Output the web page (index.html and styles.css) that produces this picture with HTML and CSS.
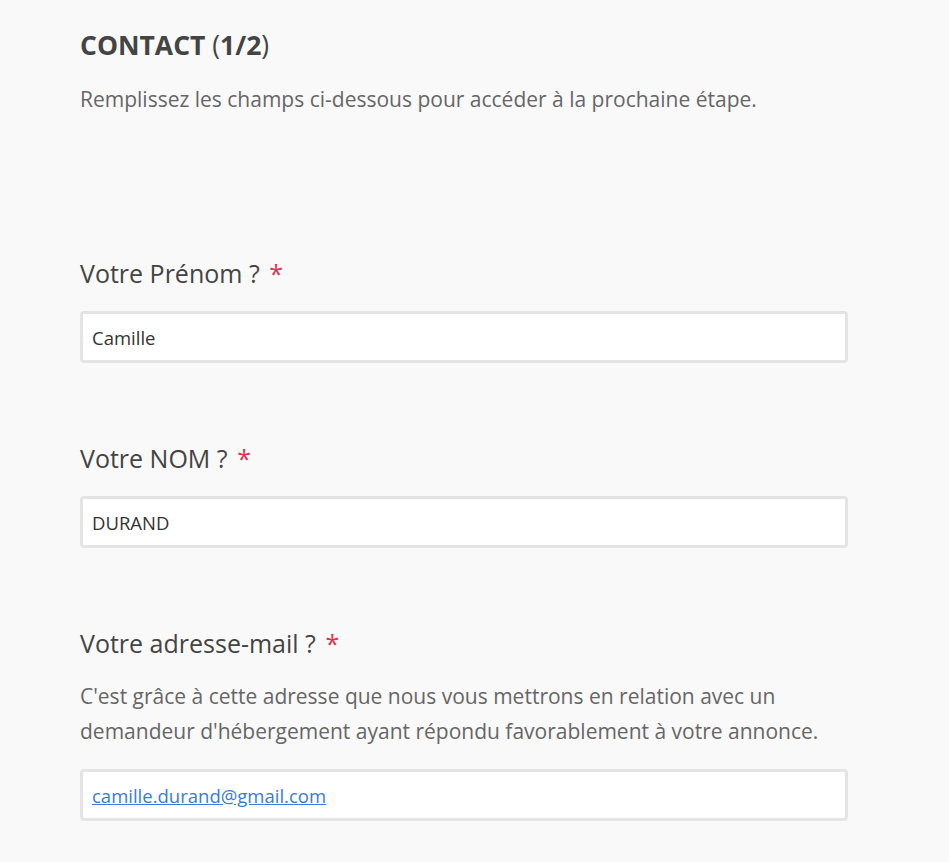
FILE: index.html
```html
<!DOCTYPE html>
<html lang="fr">
<head>
<meta charset="utf-8">
<link rel="stylesheet" href="styles.css">
</head>
<body>
<main class="form">
  <h1 class="title"><strong>CONTACT</strong> (<strong>1/2</strong>)</h1>
  <p class="intro">Remplissez les champs ci-dessous pour accéder à la prochaine étape.</p>

  <div class="field first">
    <label class="label">Votre Prénom ? <span class="req">*</span></label>
    <div class="input">Camille</div>
  </div>

  <div class="field">
    <label class="label">Votre NOM ? <span class="req">*</span></label>
    <div class="input">DURAND</div>
  </div>

  <div class="field">
    <label class="label">Votre adresse-mail ? <span class="req">*</span></label>
    <p class="help">C'est grâce à cette adresse que nous vous mettrons en relation avec un demandeur d'hébergement ayant répondu favorablement à votre annonce.</p>
    <div class="input"><a class="mail" href="#">camille.durand@gmail.com</a></div>
  </div>
</main>
</body>
</html>
```
FILE: styles.css
```css
html, body {
  margin: 0;
  padding: 0;
  background: #f9f9f9;
}
body {
  font-family: "Open Sans", "Noto Sans", sans-serif;
  color: #444;
}
.form {
  width: 768px;
  padding: 27px 0 0 80px;
}
.title {
  margin: 0;
  font-size: 26.5px;
  font-weight: 400;
  line-height: 36px;
  color: #444;
}
.title strong { font-weight: 700; }
.intro {
  margin: 21px 0 0;
  font-size: 21px;
  line-height: 30px;
  color: #666;
}
.field { margin-top: 77px; }
.field.first { margin-top: 141px; }
.label {
  display: block;
  font-size: 25px;
  line-height: 36px;
  color: #444;
}
.req { color: #e0304e; margin-left: 3px; }
.help {
  margin: 18px 0 10px;
  font-size: 21px;
  line-height: 35px;
  color: #666;
}
.input {
  margin-top: 20px;
  box-sizing: border-box;
  height: 52px;
  border: 3px solid #e4e4e4;
  border-radius: 4px;
  background: #fff;
  padding: 0 9px;
  display: flex;
  align-items: center;
  font-size: 18.5px;
  color: #333;
}
.mail {
  color: #3a7bd5;
  text-decoration: underline;
}
```
